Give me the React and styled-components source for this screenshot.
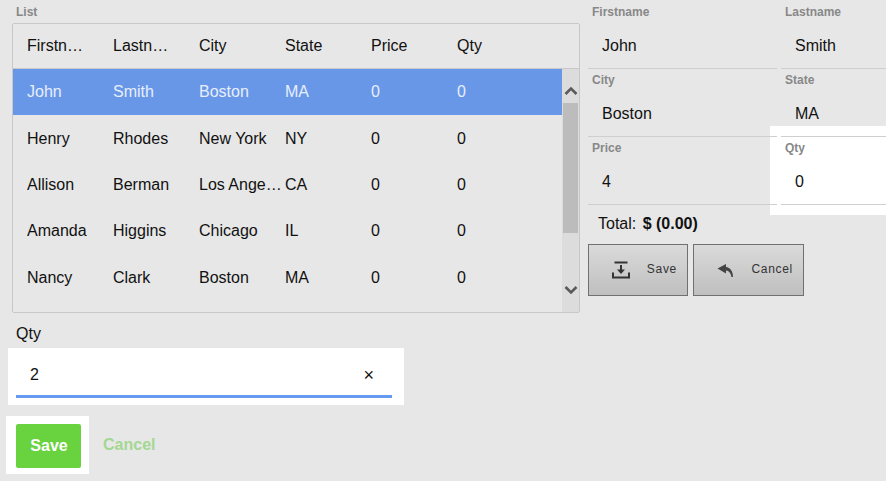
import React from "react";
import styled, { createGlobalStyle } from "styled-components";

const Global = createGlobalStyle`
  html, body { margin: 0; padding: 0; background: #e7e7e7; height: 100%; overflow: hidden; }
  * { box-sizing: border-box; }
  body { font-family: "Liberation Sans", Arial, sans-serif; color: #111; font-size: 16px; }
`;

const Page = styled.div`
  display: flex;
  align-items: flex-start;
  width: 886px;
  height: 481px;
  overflow: hidden;
`;

const Left = styled.div`
  width: 580px;
  flex: none;
  padding-left: 12px;
  display: flex;
  flex-direction: column;
`;

const SmallLabel = styled.div`
  font-size: 12px;
  line-height: 14px;
  font-weight: bold;
  color: #888;
`;

const ListLabel = styled(SmallLabel)`
  height: 23px;
  padding: 5px 0 0 4px;
`;

const Table = styled.div`
  height: 290px;
  border: 1px solid #c8c8c8;
  border-radius: 2px;
  display: flex;
  flex-direction: column;
`;

const HeaderRow = styled.div`
  height: 45px;
  flex: none;
  display: flex;
  align-items: center;
  padding-left: 14px;
  border-bottom: 1px solid #c8c8c8;
`;

const Cell = styled.div`
  width: 86px;
  flex: none;
  padding-right: 2px;
  white-space: nowrap;
  overflow: hidden;
  text-overflow: ellipsis;
  font-size: 16px;
  line-height: 20px;
`;

const HeaderCell = styled(Cell)`
  padding-right: 24px;
`;

const TableBody = styled.div`
  flex: 1;
  display: flex;
  min-height: 0;
`;

const Rows = styled.div`
  flex: 1;
  display: flex;
  flex-direction: column;
`;

const Row = styled.div`
  height: 46.3px;
  flex: none;
  display: flex;
  align-items: center;
  padding: 0.5px 0 0 14px;
  background: ${(p) => (p.$active ? "#6897e8" : "transparent")};
  color: ${(p) => (p.$active ? "#e8eefb" : "#111")};
`;

const Scrollbar = styled.div`
  width: 17px;
  flex: none;
  background: #dcdcdc;
  display: flex;
  flex-direction: column;
  align-items: center;
`;

const ScrollButton = styled.div`
  height: 34px;
  flex: none;
  width: 100%;
  display: flex;
  align-items: center;
  justify-content: center;
  padding: ${(p) => (p.$up ? "10px 0 0" : "0 0 10px")};
`;

const Thumb = styled.div`
  width: 15px;
  height: 130px;
  flex: none;
  background: #bcbcbc;
`;

const ScrollGap = styled.div`
  flex: 1;
`;

const QtyLabel = styled.div`
  font-size: 16px;
  line-height: 20px;
  margin: 11px 0 4px 4px;
`;

const QtyBox = styled.div`
  width: 396px;
  height: 57px;
  margin-left: -4px;
  padding: 0 12px 7px 8px;
  background: #fff;
  display: flex;
`;

const QtyInner = styled.div`
  flex: 1;
  display: flex;
  align-items: center;
  justify-content: space-between;
  padding: 6px 18px 0 14px;
  border-bottom: 3px solid #6699f0;
  font-size: 16px;
`;

const Clear = styled.span`
  font-size: 18px;
  line-height: 18px;
  color: #111;
`;

const Actions = styled.div`
  display: flex;
  align-items: center;
  margin: 11px 0 0 -6px;
`;

const SaveHalo = styled.div`
  background: #fff;
  padding: 8px 8px 6px 10px;
`;

const PrimaryButton = styled.div`
  width: 65px;
  height: 44px;
  padding-left: 1px;
  background: #69d33f;
  border-radius: 2px;
  color: #fff;
  font-weight: bold;
  font-size: 16px;
  display: flex;
  align-items: center;
  justify-content: center;
`;

const LinkButton = styled.div`
  margin-left: 14px;
  font-weight: bold;
  font-size: 16px;
  color: #a4d793;
`;

const Right = styled.div`
  flex: 1;
  margin-left: 8px;
  min-width: 0;
`;

const FormGrid = styled.div`
  display: grid;
  grid-template-columns: 189px 1fr;
  column-gap: 4px;
  isolation: isolate;
`;

const Field = styled.div`
  position: relative;
  height: ${(p) => (p.$first ? "69px" : "68px")};
  padding-top: ${(p) => (p.$first ? "5px" : "4px")};
  border-bottom: 1px solid #cfcfcf;
`;

const FieldLabel = styled(SmallLabel)`
  padding-left: 4px;
`;

const FieldValue = styled.div`
  font-size: 16px;
  line-height: 20px;
  padding: 17px 0 0 14px;
`;

const QtyField = styled(Field)`
  &::before {
    content: "";
    position: absolute;
    z-index: -1;
    left: -11px;
    right: 0;
    top: -11px;
    bottom: -11px;
    background: #fff;
  }
`;

const Total = styled.div`
  padding: 9px 0 0 10px;
  font-size: 16px;
  line-height: 20px;
`;

const Amount = styled.b`
  margin-left: 2px;
`;

const Buttons = styled.div`
  display: flex;
  gap: 5px;
  margin-top: 10px;
`;

const ToolButton = styled.div`
  width: ${(p) => p.$w}px;
  height: 52px;
  border: 1px solid #707070;
  background: linear-gradient(#dadada, #bfbfbf);
  display: flex;
  align-items: center;
  justify-content: flex-end;
  padding-right: 10px;
  gap: ${(p) => p.$gap}px;
  font-size: 12px;
  letter-spacing: 0.7px;
  color: #333;
`;

const ToolLabel = styled.span`
  padding-bottom: 3px;
`;

const Up = () => (
  <svg width="14" height="10" viewBox="0 0 14 10">
    <path d="M1.5 8 L7 2.5 L12.5 8" fill="none" stroke="#5a5a5a" strokeWidth="2.6" />
  </svg>
);
const Down = () => (
  <svg width="14" height="10" viewBox="0 0 14 10">
    <path d="M1.5 2 L7 7.5 L12.5 2" fill="none" stroke="#5a5a5a" strokeWidth="2.6" />
  </svg>
);
const SaveIcon = () => (
  <svg width="18" height="18" viewBox="0 0 18 18">
    <path d="M2.5 1.5 H15.5" stroke="#333" strokeWidth="2" fill="none" />
    <path d="M8 4 H10 V8.5 H13 L9 13 L5 8.5 H8 Z" fill="#333" />
    <path d="M1 11.5 V16.5 H17 V11.5" stroke="#333" strokeWidth="2" fill="none" />
  </svg>
);
const BackIcon = () => (
  <svg width="16" height="13" viewBox="0 0 16 13">
    <path d="M0.5 4.5 L9 0 V3 C13 3.5 16 7 16 13 H14.5 C14 9.5 12 6.5 9 6.5 V9.5 Z" fill="#444" />
  </svg>
);

const columns = ["Firstname", "Lastname", "City", "State", "Price", "Qty"];
const people = [
  ["John", "Smith", "Boston", "MA", "0", "0"],
  ["Henry", "Rhodes", "New York", "NY", "0", "0"],
  ["Allison", "Berman", "Los Angeles", "CA", "0", "0"],
  ["Amanda", "Higgins", "Chicago", "IL", "0", "0"],
  ["Nancy", "Clark", "Boston", "MA", "0", "0"],
];

export default function App() {
  return (
    <Page>
      <Global />
      <Left>
        <ListLabel>List</ListLabel>
        <Table>
          <HeaderRow>
            {columns.map((c) => (
              <HeaderCell key={c}>{c}</HeaderCell>
            ))}
          </HeaderRow>
          <TableBody>
            <Rows>
              {people.map((p, i) => (
                <Row key={p[0]} $active={i === 0}>
                  {p.map((v, j) => (
                    <Cell key={j}>{v}</Cell>
                  ))}
                </Row>
              ))}
            </Rows>
            <Scrollbar>
              <ScrollButton $up><Up /></ScrollButton>
              <Thumb />
              <ScrollGap />
              <ScrollButton><Down /></ScrollButton>
            </Scrollbar>
          </TableBody>
        </Table>
        <QtyLabel>Qty</QtyLabel>
        <QtyBox>
          <QtyInner>
            <span>2</span>
            <Clear>×</Clear>
          </QtyInner>
        </QtyBox>
        <Actions>
          <SaveHalo>
            <PrimaryButton>Save</PrimaryButton>
          </SaveHalo>
          <LinkButton>Cancel</LinkButton>
        </Actions>
      </Left>
      <Right>
        <FormGrid>
          <Field $first>
            <FieldLabel>Firstname</FieldLabel>
            <FieldValue>John</FieldValue>
          </Field>
          <Field $first>
            <FieldLabel>Lastname</FieldLabel>
            <FieldValue>Smith</FieldValue>
          </Field>
          <Field>
            <FieldLabel>City</FieldLabel>
            <FieldValue>Boston</FieldValue>
          </Field>
          <Field>
            <FieldLabel>State</FieldLabel>
            <FieldValue>MA</FieldValue>
          </Field>
          <Field>
            <FieldLabel>Price</FieldLabel>
            <FieldValue>4</FieldValue>
          </Field>
          <QtyField>
            <FieldLabel>Qty</FieldLabel>
            <FieldValue>0</FieldValue>
          </QtyField>
        </FormGrid>
        <Total>
          Total: <Amount>$ (0.00)</Amount>
        </Total>
        <Buttons>
          <ToolButton $w={100} $gap={17}>
            <SaveIcon />
            <ToolLabel>Save</ToolLabel>
          </ToolButton>
          <ToolButton $w={111} $gap={18}>
            <BackIcon />
            <ToolLabel>Cancel</ToolLabel>
          </ToolButton>
        </Buttons>
      </Right>
    </Page>
  );
}
